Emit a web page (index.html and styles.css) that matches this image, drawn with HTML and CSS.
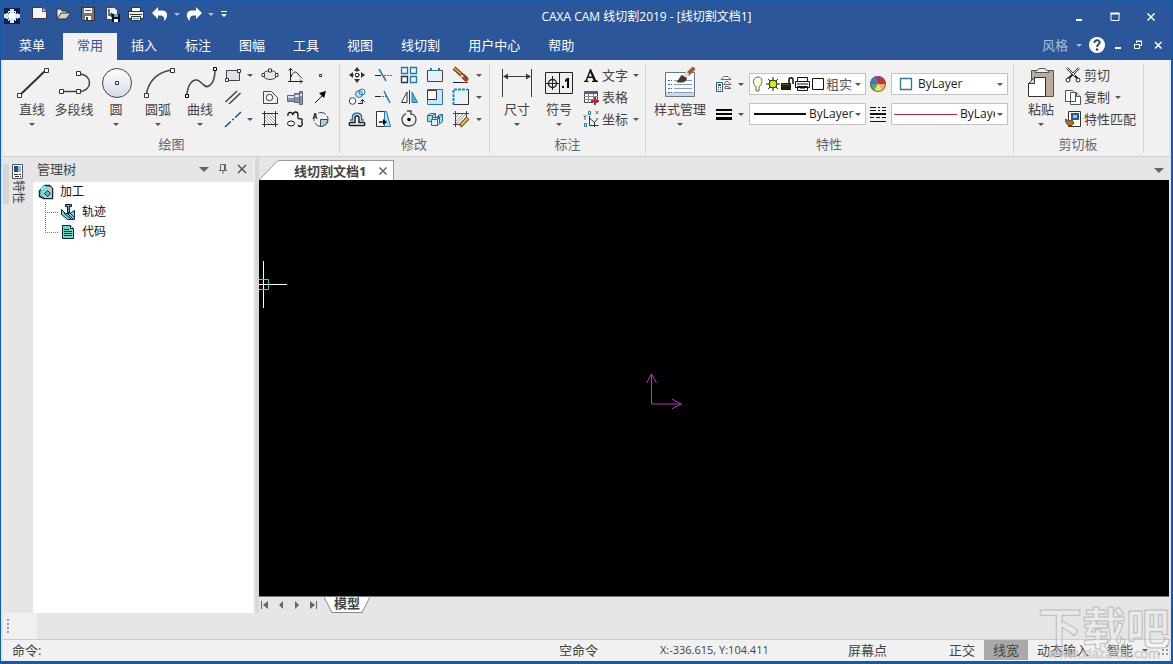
FILE: index.html
```html
<!DOCTYPE html>
<html lang="zh-CN">
<head>
<meta charset="utf-8">
<title>CAXA CAM 线切割2019</title>
<link rel="stylesheet" href="styles.css">
</head>
<body>
<div class="window">
<header class="titlebar">
  <div class="quick">
    <button class="app" aria-label="应用程序"><svg width="16" height="16" viewBox="0 0 16 16"><path fill="#0a1f4c" d="M0 0h16v16H0z"/><path fill="#d4eaf5" d="M6 1h4v2h2v2h2v1h2v4h-2v1h-2v2h-2v2H6v-2H4v-2H2v-1H0V6h2V5h2V3h2z"/><path stroke="#173b6d" stroke-dasharray="1 3" d="M5.500 0v16M10.500 0v16M0 5.500h16M0 10.500h16"/><path fill="#fff" d="M5 5h6v6H5z"/></svg></button>
    <button aria-label="新建"><svg width="18" height="16" viewBox="0 0 18 16"><path fill="#f4f4f4" stroke="#3a3a3a" d="M1.500 1.500h10l4 4v7h-14z"/><path fill="#ccc" stroke="#555" d="M11.500 1.500v4h4"/></svg></button>
    <button aria-label="打开"><svg width="18" height="16" viewBox="0 0 18 16"><path fill="#eee" stroke="#333" d="M2 13V3h4l1 2h5v3"/><path fill="#cfcfcf" stroke="#333" d="M2 13l4-6h10l-5 6z"/></svg></button>
    <button aria-label="保存"><svg width="18" height="16" viewBox="0 0 18 16"><path fill="#777" stroke="#333" d="M2.500 1.500h13v13h-12l-1-1z"/><path fill="#fff" d="M5 2h8v5H5zM6 10h6v4H6z"/><path fill="#444" d="M7 11h2v3H7zM6 4h6v1H6z"/></svg></button>
    <button aria-label="另存为"><svg width="18" height="16" viewBox="0 0 18 16"><path fill="#eee" stroke="#444" d="M3.500 1.500h8l3 3v9h-11z"/><path fill="none" stroke="#16366f" stroke-width="1.300" d="M6 3v6h3M8 7l2 2-2 2"/><path fill="#111" d="M9 8h8v8H9z"/><path fill="#62a7e3" d="M11 8h4v3h-4z"/><path fill="#fff" d="M11 13h4v3h-4z"/></svg></button>
    <button aria-label="打印"><svg width="18" height="16" viewBox="0 0 18 16"><path fill="#fff" stroke="#333" d="M4.500 1.500h9v5h-9z"/><path fill="#eee" stroke="#333" d="M1.500 5.500h15v7h-15z"/><path fill="#333" d="M3 8h12v1H3z"/><path fill="#dff3ff" stroke="#333" d="M4.500 10.500h9v4h-9z"/><path fill="#39a6d8" d="M6 12h6v1H6z"/></svg></button>
    <button aria-label="撤销"><svg width="18" height="16" viewBox="0 0 18 16"><path fill="#fff" d="M1 7l6-6v3.500h4c7 0 6 8 2 10.500 1-4-1-6-6-5.500V13z"/></svg></button>
    <button class="drop" aria-label="撤销列表"><span class="caret"></span></button>
    <button aria-label="重做"><svg width="18" height="16" viewBox="0 0 18 16"><path fill="#fff" d="M17 7l-6-6v3.500H7C0 4.500 1 12.500 5 15c-1-4 1-6 6-5.500V13z"/></svg></button>
    <button class="drop" aria-label="重做列表"><span class="caret"></span></button>
    <button class="custom" aria-label="自定义"><svg width="8" height="10" viewBox="0 0 8 10"><path fill="#fff" d="M1 2h6v1H1zM1 5h6L4 8z"/></svg></button>
  </div>
  <h1>CAXA CAM 线切割2019 - [线切割文档1]</h1>
  <div class="wincontrols">
    <button aria-label="最小化"><svg width="12" height="12"><path fill="#fff" d="M3 8h6v2H3z"/></svg></button>
    <button aria-label="最大化"><svg width="12" height="12"><path fill="none" stroke="#fff" d="M2 2.500h8v7H2z"/><path fill="#fff" d="M1.500 1.500h9v2h-9z"/></svg></button>
    <button aria-label="关闭"><svg width="12" height="12"><path stroke="#fff" stroke-width="1.500" d="M2.500 2.500l7 7m0-7l-7 7"/></svg></button>
  </div>
</header>
<nav class="menubar">
  <button class="first">菜单</button><button class="active">常用</button><button>插入</button><button>标注</button><button>图幅</button><button>工具</button><button>视图</button><button>线切割</button><button>用户中心</button><button>帮助</button>
  <div class="menuright">
    <button class="style">风格<span class="caret"></span></button>
    <button class="help" aria-label="帮助信息"><svg width="18" height="18" viewBox="0 0 18 18"><circle cx="9" cy="9" r="8" fill="#fff"/><path fill="none" stroke="#223d70" stroke-width="1.800" d="M6.300 7c0-3.800 5.700-3.500 5.400-.3C11.500 8.500 9 8.500 9 11"/><circle cx="9" cy="13.500" r="1.200" fill="#223d70"/></svg></button>
    <button aria-label="最小化文档"><svg width="10" height="10"><path fill="#fff" d="M2 7h6v2H2z"/></svg></button>
    <button aria-label="还原文档"><svg width="10" height="10"><path fill="none" stroke="#fff" d="M3.500 3V1.500h5v4H7M1.500 4.500h5v4h-5z"/><path stroke="#fff" d="M3 1h6M1 4.500h6"/></svg></button>
    <button aria-label="关闭文档"><svg width="10" height="10"><path stroke="#fff" stroke-width="1.500" d="M2 2l6.500 6.500m0-6.500L2 8.500"/></svg></button>
  </div>
</nav>
<section class="ribbon">
  <div class="group draw">
    <div class="tools">
      <button class="big"><svg width="36" height="32"><path stroke="#333" stroke-width="2" d="M5.500 28.500L32 3"/><g fill="#fff" stroke="#333"><path d="M3.500 26.500h4v4h-4zM30.500 1.500h4v4h-4z"/></g></svg>直线<span class="caret"></span></button>
      <button class="big"><svg width="36" height="32"><path fill="none" stroke="#444" stroke-width="1.500" d="M6 24.500h17c14 0 14-17.500 0-17.500"/><g fill="#fff" stroke="#333"><path d="M3.500 22.500h4v4h-4zM20.500 22.500h4v4h-4zM20.500 4.500h4v4h-4z"/></g></svg>多段线</button>
      <button class="big"><svg width="36" height="32"><defs><linearGradient id="disc" x2="0" y2="1"><stop stop-color="#fff"/><stop offset="1" stop-color="#d5dae6"/></linearGradient></defs><circle cx="19" cy="16" r="14.500" fill="url(#disc)" stroke="#444"/><path fill="#fff" stroke="#333" d="M17.500 14.500h3v3h-3z"/></svg>圆<span class="caret"></span></button>
      <button class="big"><svg width="36" height="32"><path fill="none" stroke="#444" stroke-width="1.500" d="M6 28C9 13 17 5 32 3"/><g fill="#fff" stroke="#333"><path d="M4.500 26.500h4v4h-4zM30.500 1.500h4v4h-4z"/></g></svg>圆弧<span class="caret"></span></button>
      <button class="big"><svg width="36" height="32"><path fill="none" stroke="#444" stroke-width="1.500" d="M5 29c0-10 5-17 10-16s7 9 12 6 6-9 6-16"/><g fill="#fff" stroke="#000"><path d="M3.500 27.500h3v3h-3zM31.500 .5h3v3h-3z"/></g></svg>曲线<span class="caret"></span></button>
      <div class="grid drawgrid">
        <button class="split" aria-label="矩形"><svg width="18" height="18"><path fill="#dde1ea" stroke="#444" d="M2.500 4.500h13v10h-13z"/><g fill="#fff" stroke="#333"><path d="M1.500 12.500h3v3h-3zM13.500 3.500h3v3h-3z"/></g></svg><span class="caret"></span></button>
        <button aria-label="椭圆"><svg width="18" height="18"><ellipse cx="9" cy="9" rx="7" ry="4.500" fill="#e4e8ee" stroke="#444"/><g fill="#fff" stroke="#333"><path d="M7.500 3h3v3h-3zM1 7.500h2.500v3H1zM14.500 7.500H17v3h-2.500z"/></g></svg></button>
        <button aria-label="公式曲线"><svg width="18" height="18"><path fill="none" stroke="#222" d="M4.500 2v13.500h12M2.500 4.500l2-2 2 2M14 13.500l2 2-2 2M2 15.500h3M5 11c2-6 5-6 7-3s3 3 4 4"/></svg></button>
        <button aria-label="点"><svg width="18" height="18"><path fill="#fff" stroke="#333" d="M8.500 8.500h2v2h-2z"/></svg></button>
        <button class="split" aria-label="平行线"><svg width="18" height="18"><path stroke="#444" stroke-width="1.500" d="M1.500 14L13 3M5 16L16.500 5"/></svg></button>
        <button aria-label="孔"><svg width="18" height="18"><path fill="#eef1f5" stroke="#444" d="M2.500 3.500h8l6 6v6h-14z"/><circle cx="8.500" cy="9.500" r="3.200" fill="#fff" stroke="#333"/></svg></button>
        <button aria-label="轴"><svg width="18" height="18"><path fill="#8494ab" stroke="#5b6b82" d="M1.500 7.500h7v6h-7zM8.500 5.500h5v9h-5zM13.500 3.500h3v13h-3z"/><path stroke="#dbe5f1" stroke-width="2" d="M2 9h6M9 8h4M14 7h2"/></svg></button>
        <button aria-label="箭头"><svg width="18" height="18"><path stroke="#111" d="M4 15l9-9"/><path d="M15 3l-2 7-5-5z"/></svg></button>
        <button class="split" aria-label="中心线"><svg width="18" height="18"><path stroke="#15528f" stroke-width="1.500" stroke-dasharray="8 2 2 2" d="M1 17L17 2"/></svg><span class="caret"></span></button>
        <button aria-label="填充"><svg width="18" height="18"><path fill="#fff" d="M4 4h10v10H4z"/><path fill="none" stroke="#333" d="M3.500 1v16M14.500 1v16M1 3.500h16M1 14.500h16"/><path stroke="#99a" d="M4 4l10 10M7 4l7 7M4 7l7 7M10 4l4 4M4 10l4 4"/></svg></button>
        <button aria-label="云线"><svg width="18" height="18"><path fill="none" stroke="#111" stroke-width="1.300" d="M2 6c-1-4 4-5 5-1 0-4 5-4 5 0 0 2-1 3 1 4 2-1 4 0 3 2-1 1 1 2 0 4s-3 2-4 0"/><ellipse cx="5" cy="13.500" rx="3.500" ry="2.500" fill="#fff" stroke="#111"/></svg></button>
        <button aria-label="局部放大"><svg width="18" height="18"><circle cx="10" cy="9.500" r="7" fill="none" stroke="#444" stroke-dasharray="8 2"/><path fill="#a8d0e8" stroke="#444" d="M9.500 9.500h7c0 4-3 7-7 7z"/><path fill="none" stroke="#222" d="M2 9l2-6 2 6M3 7h3"/></svg></button>
      </div>
    </div>
    <h2>绘图</h2>
  </div>
  <div class="group modify">
    <div class="tools">
      <div class="grid modgrid">
        <button aria-label="平移"><svg width="18" height="18"><path fill="#333" d="M9 1l3 4H6zM9 17l3-4H6zM1 9l4-3v6zM17 9l-4-3v6z"/><path stroke="#333" stroke-dasharray="2 1" d="M9 4v10M4 9h10"/><path fill="#fff" stroke="#333" d="M7.500 7.500h3v3h-3z"/></svg></button>
        <button aria-label="裁剪"><svg width="18" height="18"><path stroke="#222" d="M1 9.500h6"/><path stroke="#2479ad" stroke-dasharray="2 1" d="M10 9.500h8"/><path stroke="#2479ad" stroke-width="1.500" d="M5 3l7 12"/></svg></button>
        <button aria-label="阵列"><svg width="18" height="18"><g fill="#eaf7ff" stroke="#2479ad" stroke-width="1.300"><path d="M1.500 1.500h6v6h-6zM10.500 1.500h6v6h-6zM10.500 10.500h6v6h-6z"/><path stroke="#333" d="M1.500 10.500h6v6h-6z"/></g></svg></button>
        <button aria-label="打断"><svg width="18" height="18"><path fill="#e6f1f8" stroke="#444" d="M4.500 4.500h-3v11h15v-11h-3"/><path stroke="#2479ad" d="M5 4.500h8"/><path stroke="#2479ad" stroke-width="2" d="M5 2v3M13 2v3"/></svg></button>
        <button aria-label="删除"><svg width="18" height="18"><path stroke="#5b3317" stroke-width="4" d="M2 2l10 9"/><path stroke="#e3a04c" stroke-width="2" d="M2 2l7 6"/><path stroke="#8a4a30" stroke-width="5" stroke-linecap="round" d="M12 11l2 2"/><path stroke="#f5e9dc" stroke-width="2" d="M9 9l2 2"/><path stroke="#222" d="M1 16.500h10"/><path stroke="#a22" d="M11 16.500h5"/></svg></button>
        <button class="drop" aria-label="删除选项"><span class="caret"></span></button>
        <button aria-label="复制对象"><svg width="18" height="18"><circle cx="11" cy="6" r="3.500" fill="#bde2f4" stroke="#2479ad"/><circle cx="14" cy="4" r="3" fill="none" stroke="#2479ad"/><circle cx="4.500" cy="13" r="3.300" fill="#fff" stroke="#444"/><path fill="none" stroke="#222" d="M10 15.500h4.500V12M12.500 13.500l2-2 2 2"/></svg></button>
        <button aria-label="延伸"><svg width="18" height="18"><path stroke="#222" d="M1 8.500h6"/><path stroke="#2479ad" stroke-dasharray="2 1" d="M8 8.500h6"/><path stroke="#2479ad" stroke-width="1.500" d="M10 3l6 12"/></svg></button>
        <button aria-label="镜像"><svg width="18" height="18"><path fill="#fff" stroke="#333" d="M1.500 14.500L7 4v10.500z"/><path stroke="#333" d="M9.500 2v14"/><path fill="#62add6" stroke="#2479ad" d="M17.500 14.500L12 4v10.500z"/></svg></button>
        <button aria-label="缩放"><svg width="18" height="18"><path fill="#a9d4ec" stroke="#2479ad" d="M1.500 1.500h15v15h-15z"/><path fill="#cce6f5" d="M11 2h5v14H2v-4h9z"/><path fill="#fff" stroke="#333" d="M1.500 2.500h9v9h-9z"/></svg></button>
        <button aria-label="拉伸"><svg width="18" height="18"><path fill="#e9f2f8" stroke="#333" d="M1.500 1.500h15v15h-15z"/><path fill="none" stroke="#f1f1f1" stroke-width="2" d="M1.500 14V1.500H14"/><path fill="none" stroke="#2383bc" stroke-width="2" stroke-dasharray="3 1" d="M1.500 17V1.500H15"/></svg></button>
        <button class="drop" aria-label="拉伸选项"><span class="caret"></span></button>
        <button aria-label="等距"><svg width="18" height="18"><path fill="none" stroke="#236d9d" stroke-width="1.500" d="M2 10h2.500V7c0-5 9-5 9 0v3H16"/><path fill="none" stroke="#222" stroke-width="1.500" d="M2 15.500h14c1 0 1-3 0-3h-5V8c0-3-4-3-4 0v4.500H2c-1 0-1 3 0 3z"/></svg></button>
        <button aria-label="拉长"><svg width="18" height="18"><path fill="#fff" stroke="#333" d="M2.500 1.500h8v15h-8z"/><path fill="#b5d9ed" stroke="#2479ad" d="M10.500 1.500h2l4 15h-6z"/><path stroke="#111" stroke-width="1.500" d="M5 12h7"/><path d="M9 9l4 3-4 3z"/></svg></button>
        <button aria-label="旋转"><svg width="18" height="18"><path fill="none" stroke="#444" stroke-width="1.300" d="M6 3.500c-7 4-4 13 3.500 12.500s9-10 1.500-12.500M7 1h4v4"/><circle cx="9" cy="9.500" r="1.800"/></svg></button>
        <button aria-label="块"><svg width="18" height="18"><g fill="#a9d7ef" stroke="#236d9d"><path d="M1.500 5.500l3-2h5v6l-3 2h-5zM1.500 5.500h5l3-2M6.500 5.500v6"/><path d="M11.500 6.500l2-2h3v7l-2 2h-3zM11.500 6.500h3l2-2"/><path fill="#d9effa" d="M5.500 9.500l2-2h6v6l-2 2h-6zM5.500 9.500h6l2-2M11.500 9.500v6"/></g></svg></button>
        <button aria-label="填充编辑"><svg width="18" height="18"><path stroke="#444" d="M3.500 1v16M1 3.500h16M1 14.500h11M14.500 1v8"/><path stroke="#99a" d="M4 7l3-3M4 11l7-7M4 14L14 4M8 14l5-5"/><path stroke="#735017" stroke-width="4" d="M8 16l8-8"/><path stroke="#f1c44c" stroke-width="2" d="M9 15l6.500-6.500"/></svg></button>
        <button class="drop" aria-label="填充选项"><span class="caret"></span></button>
      </div>
    </div>
    <h2>修改</h2>
  </div>
  <div class="group annotate">
    <div class="tools">
      <button class="big"><svg width="36" height="32"><path stroke="#3b4032" d="M3.500 2v28M32.500 2v28M5 9.500h26"/><path fill="#3b4032" d="M4 9.500l5-3v6zM32 9.500l-5-3v6z"/></svg>尺寸<span class="caret"></span></button>
      <button class="big"><svg width="36" height="32"><path fill="#eee" stroke="#222" d="M4.500 5.500h27v21h-27z"/><path fill="none" stroke="#222" d="M18.500 5v21M11.500 9v14M5 16.500h13"/><circle cx="11.500" cy="16.500" r="4" fill="none" stroke="#222" stroke-width="1.500"/><path d="M21 19h2v2h-2zM26 11h2v10h-2v-7l-2 1v-2z"/></svg>符号<span class="caret"></span></button>
      <div class="list">
        <button><svg width="16" height="18"><path fill="#111" d="M8 3l5 11 2 1v1H9v-1l1.500-.5-1-2.500H5l-1 2.500 1.500.5v1H1v-1l1.500-.5L7 3zM5.500 10.500H9L7.200 6.500z"/></svg>文字<span class="caret"></span></button>
        <button><svg width="16" height="18"><path fill="#fff" stroke="#444" d="M1.500 3.500h13v11h-13z"/><path fill="#476686" d="M1 3h14v3H1z"/><path stroke="#889" d="M1 8.500h14M1 11.500h14M5.500 6v9M10.500 6v9"/><path stroke="#c1212c" stroke-width="2" d="M12 9v8M8 13h8"/></svg>表格</button>
        <button><svg width="16" height="18"><path fill="none" stroke="#333" d="M6.500 6v9.500h9M6.500 8l5 4.500L15 8M11.500 12v5"/><path fill="none" stroke="#1777b8" d="M.5 5L2 7l1.500-2M2 7v3M12.500 1l3 3m0-3l-3 3M5.500 1.500h2v3h-2zM1.500 13.500h2v3h-2z"/></svg>坐标<span class="caret"></span></button>
      </div>
    </div>
    <h2>标注</h2>
  </div>
  <div class="group props">
    <div class="tools">
      <button class="big wide"><svg width="36" height="32"><path fill="#f8fbff" stroke="#667788" d="M3.500 5.500h29v24h-29z"/><path fill="#cbd8ea" d="M4 25h28v4H4z"/><path stroke="#8b9fb6" d="M12 13.500h18M12 17.500h18M12 21.500h18M12 25.500h18"/><path stroke="#336ca1" stroke-dasharray="2 1" d="M6 13.500h4M6 17.500h4M6 21.500h4M6 25.500h4"/><path stroke="#a45d32" stroke-width="4" stroke-linecap="round" d="M31 2l-5 5"/><path stroke="#ddd" stroke-width="4" d="M26 6l-3 3"/><path fill="#543323" d="M20 8l5 3c-1 5-5 5-11 4 3-1 3-5 6-7z"/></svg>样式管理<span class="caret"></span></button>
      <div class="proprows">
        <div class="proprow">
          <button class="split" aria-label="图层"><svg width="18" height="18"><path fill="#fff" stroke="#666" d="M6 4.500l3-3h4l3 3zM9 9.500l2-3h2l3 3zM10 13.500v-2h3l3 2z"/><path fill="#fff" stroke="#245e91" d="M1.500 7.500h6v9h-6z"/><path fill="#245e91" d="M3 9h3v2H3zM3 12h1v1H3zM5 12h1v1H5zM3 14h1v1H3zM5 14h1v1H5z"/></svg><span class="caret"></span></button>
          <div class="combo layer"><svg width="72" height="18"><path fill="#ffffd8" stroke="#666" d="M4 12C-1 7 2 2 6 2s6 5 1 10v4H4z"/><g stroke="#222"><path d="M21 2v14M14 9h14M16 4l10 10M26 4L16 14"/><circle cx="21" cy="9" r="4" fill="#d3ed00"/></g><path fill="#5a5714" stroke="#111" d="M29.500 8.500h9v6h-9z"/><path fill="none" stroke="#111" stroke-width="1.500" d="M37 8V5c0-3 4-3 4 0v4M30 11h8M30 13h8"/><path fill="#fff" stroke="#111" d="M45.500 2.500h10v4h-10zM43.500 6.500h14v6h-14zM45.500 11.500h10v4h-10z"/><path stroke="#111" d="M45 9h11M48 13h5"/><path fill="#fff" stroke="#111" d="M60.500 3.500h11v11h-11z"/></svg><select aria-label="图层选择"><option>粗实</option></select><span class="caret"></span></div>
          <button class="mid" aria-label="颜色"><svg width="18" height="18"><path fill="#cf2e37" d="M9 9V1a8 8 0 0 1 8 8z"/><path fill="#f0b45a" d="M9 9h8a8 8 0 0 1-4 7z"/><path fill="#eee76d" d="M9 9l4 7a8 8 0 0 1-8 0z"/><path fill="#51ab5c" d="M9 9l-4 7a8 8 0 0 1-4-7z"/><path fill="#3c77cd" d="M9 9H1a8 8 0 0 1 4-7z"/><path fill="#6e4fa3" d="M9 9L5 2a8 8 0 0 1 4-1z"/><circle cx="9" cy="9" r="7.500" fill="none" stroke="#666"/></svg></button>
          <div class="combo"><svg width="22" height="18"><path fill="#fff" stroke="#2479ad" stroke-width="1.300" d="M6.500 3.500h11v11h-11z"/></svg><select aria-label="颜色选择"><option>ByLayer</option></select><span class="caret"></span></div>
        </div>
        <div class="proprow">
          <button class="split" aria-label="线宽设置"><svg width="18" height="18"><path d="M1 4h16v2H1zM1 8h16v2H1zM1 12h16v3H1z"/></svg><span class="caret"></span></button>
          <div class="combo weight"><svg width="56" height="18"><path fill="#111" d="M2 8h52v2H2z"/></svg><select aria-label="线宽选择"><option>ByLayer</option></select><span class="caret"></span></div>
          <button class="mid" aria-label="线型"><svg width="18" height="18"><path stroke="#111" stroke-dasharray="6 2 2 2" d="M1 2.500h16M1 5.500h16"/><path fill="#111" d="M1 8h16v2H1zM1 16h16v1H1z"/><path stroke="#111" stroke-dasharray="4 2" d="M1 12.500h16"/></svg></button>
          <div class="combo"><svg width="64" height="18"><path stroke="#b32832" d="M0 9.500h63"/></svg><select aria-label="线型选择"><option>ByLayer</option></select><span class="caret"></span></div>
        </div>
      </div>
    </div>
    <h2>特性</h2>
  </div>
  <div class="group clip">
    <div class="tools">
      <button class="big"><svg width="36" height="32"><path fill="#b8ac9c" stroke="#554" d="M8.500 3.500h22v26h-22z"/><path fill="#eee" stroke="#555" d="M12 5.500c0-3 3-1 4-4h6c1 3 4 1 4 4z"/><path fill="#fff" stroke="#333" d="M11.500 10.500h11v19h-17v-13z"/><path fill="#d5dbe2" stroke="#333" d="M11.500 10.500v6h-6z"/></svg>粘贴<span class="caret"></span></button>
      <div class="list">
        <button><svg width="16" height="18"><path stroke="#222" stroke-width="2" d="M2 2l11 11M14 2L3 13"/><path stroke="#eee" d="M2 2l8 8M14 2L8 8"/><g fill="#fff" stroke="#222"><circle cx="3" cy="14" r="2"/><circle cx="13" cy="14" r="2"/></g></svg>剪切</button>
        <button><svg width="16" height="18"><path fill="#fff" stroke="#555" d="M.5 2.500h7l3 3v8H.5zM5.500 4.500h6l4 4v8h-10z"/><path fill="#ddd" stroke="#555" d="M11.500 4.500v4h4"/></svg>复制<span class="caret"></span></button>
        <button><svg width="16" height="18"><path fill="#fff" stroke="#333" d="M3.500 1.500h12v15h-12z"/><path fill="#235a91" d="M6 3h8v7H6z"/><path fill="#9bc1df" d="M8 5h4v3H8z"/><path fill="#b46b2b" stroke="#684010" d="M0 9l4 2 3-1 2 3-3 3c-3 0-5-2-6-7z"/></svg>特性匹配</button>
      </div>
    </div>
    <h2>剪切板</h2>
  </div>
</section>
<main class="workspace">
  <aside class="rail"><button><svg width="12" height="16"><path fill="#fff" stroke="#555" d="M.5.5h10v14H.5z"/><path fill="#1d4f86" d="M2 2h7v6H2z"/><path fill="#8eb8d8" d="M6 2h3v6H6z"/><path stroke="#333" stroke-dasharray="4 1" d="M2 10.500h7M3 12.500h6"/></svg><span>特性</span></button></aside>
  <section class="panel">
    <header>
      <h2>管理树</h2>
      <button aria-label="面板菜单"><svg width="12" height="12"><path fill="#666" d="M1 4h10L6 9z"/></svg></button>
      <button aria-label="固定"><svg width="12" height="12"><path fill="none" stroke="#666" d="M3.500 7V1.500h5V7M2 7.500h8M6 7v4M7.500 2v5"/></svg></button>
      <button aria-label="关闭面板"><svg width="12" height="12"><path stroke="#555" stroke-width="1.500" d="M2 2l8 8m0-8l-8 8"/></svg></button>
    </header>
    <ul class="tree">
      <li><svg width="16" height="16"><path fill="#7fd2d0" stroke="#112b33" stroke-width="1.500" d="M1.500 7l5-5.500h5l3 3v10H6l-4.500-2z"/><path fill="#b9c9c9" d="M7 6l3-3h3l1 2v9H6z"/><path stroke="#6ff" stroke-width="2" d="M3 6l4-4"/><path fill="#50bdb9" stroke="#123" d="M9.500 6.500l3 3-3 3-3-3z"/></svg>加工</li>
      <li class="child"><svg width="15" height="20"><path stroke="#777" stroke-dasharray="1 1" d="M.5 0v20M0 10.500h14"/></svg><svg width="16" height="18"><path fill="#64d8cf" stroke="#124" d="M1.500 6.500l4 4h4l5-3v9h-7l-6-5z"/><path stroke="#124" d="M4 10l7 6M7 10l6 6M10 10l4 4"/><path fill="#38bdb8" stroke="#112" d="M5.500 1.500h6v2h-2v6h-2v-6h-2z"/></svg>轨迹</li>
      <li class="child"><svg width="15" height="20"><path stroke="#777" stroke-dasharray="1 1" d="M.5 0v11M0 10.500h14"/></svg><svg width="16" height="18"><path fill="#62ddd3" stroke="#123" d="M2.500 2.500h8l3 3v10h-11z"/><path fill="#fff" stroke="#123" d="M10.500 2.500v3h3"/><path stroke="#123" d="M4 6.500h5M4 8.500h8M4 10.500h8M4 12.500h8"/></svg>代码</li>
    </ul>
  </section>
  <section class="document">
    <div class="doctabs">
      <svg width="20" height="20"><path fill="#fff" stroke="#999" d="M0 20L19 .5h2V20"/><path fill="#fff" d="M19 1h1v19h-1z"/></svg><div class="doctab"><button class="name">线切割文档1</button><button aria-label="关闭标签"><svg width="10" height="10"><path stroke="#666" stroke-width="1.500" d="M1.500 1.500l7 7m0-7l-7 7"/></svg></button></div>
      <button class="tablist" aria-label="标签列表"><svg width="12" height="12"><path fill="#666" d="M1 4h10L6 9z"/></svg></button>
    </div>
    <div class="canvas">
      <svg class="cursor" width="30" height="50"><path stroke="#fff" d="M4.500 1v47M0 24.500h28"/><path fill="none" stroke="#64c991" d="M0 19.500h9.500v10H0"/></svg>
      <svg class="axes" width="36" height="38"><path fill="none" stroke="#c02fc0" d="M5.500 3v30h30M.5 12l5-9 5 9M26 28l9 5-9 5"/></svg>
    </div>
    <div class="sheets">
      <button aria-label="首页"><svg width="10" height="10"><path fill="#666" d="M1 1h1v8H1zM8 1v8L3 5z"/></svg></button>
      <button aria-label="上一页"><svg width="10" height="10"><path fill="#666" d="M7 1v8L3 5z"/></svg></button>
      <button aria-label="下一页"><svg width="10" height="10"><path fill="#666" d="M3 1v8l4-4z"/></svg></button>
      <button aria-label="末页"><svg width="10" height="10"><path fill="#666" d="M8 1h1v8H8zM2 1v8l5-4z"/></svg></button>
      <div class="sheet"><svg width="10" height="16"><path fill="#fff" stroke="#888" d="M0 0l8 15.500h3V0"/><path fill="#fff" d="M9 0h1v15H9z"/></svg><button>模型</button><svg width="10" height="16"><path fill="#fff" stroke="#888" d="M10 0L2 15.500h-3V0"/><path fill="#fff" d="M0 0h1v15H0z"/></svg></div>
    </div>
  </section>
</main>
<div class="dock"><div class="grip"><svg width="4" height="16"><path stroke="#999" stroke-width="2" stroke-dasharray="2 2" d="M2 1v14"/></svg></div></div>
<footer class="status">
  <label for="cmd">命令:</label><input id="cmd" type="text">
  <span class="mode">空命令</span><span class="coords">X:-336.615, Y:104.411</span><span class="point">屏幕点</span>
  <button>正交</button><button class="on">线宽</button><button>动态输入</button><button class="smart">智能<span class="caret"></span></button>
  <svg width="12" height="12"><path fill="#999" d="M9 1h2v2H9zM5 5h2v2H5zM9 5h2v2H9zM1 9h2v2H1zM5 9h2v2H5zM9 9h2v2H9z"/></svg>
</footer>
<div class="watermark"><b>下载吧</b><span>www.xiazaiba.com</span></div>
</div>
</body>
</html>
```
FILE: styles.css
```css
* { box-sizing: border-box; }
body { margin: 0; font: 13px/16px "Open Sans", "Noto Sans CJK SC", sans-serif; color: #444; }
button, input, select { font: inherit; color: inherit; border: 0; padding: 0; margin: 0; background: none; border-radius: 0; }
h1, h2 { margin: 0; font: inherit; }
svg { display: block; flex: none; }
.window { position: relative; height: 100vh; min-height: 400px; display: flex; flex-direction: column; background: #2b579a; border: solid #155aa8; border-width: 1px 2px 3px 1px; overflow: hidden; }
.caret { flex: none; width: 0; height: 0; border: 3px solid transparent; border-top-color: #555; border-bottom: 0; }

.titlebar { display: flex; align-items: center; height: 32px; flex: none; color: #fff; }
.quick { display: flex; align-items: center; padding-left: 3px; margin-bottom: 6px; }
.quick button { width: 24px; display: flex; justify-content: center; }
.quick .app { width: 16px; margin: 4px 8px 0 0; }
.quick .drop { width: 10px; }
.quick .custom { width: 16px; }
.quick .caret { border-top-color: #a9bddd; }
.titlebar h1 { flex: 1; text-align: center; font-size: 12px; white-space: nowrap; }
.wincontrols { display: flex; padding-right: 2px; }
.wincontrols button { width: 36px; display: flex; justify-content: center; }

.menubar { display: flex; flex: none; height: 27px; color: #fff; }
.menubar > button { padding: 0 14px 3px; white-space: nowrap; }
.menubar .first { margin: 0 4px; }
.menubar .active { background: #f1f1f1; color: #2b579a; }
.menuright { margin-left: auto; display: flex; align-items: center; padding: 0 8px 3px 0; gap: 10px; }
.menuright .style { display: flex; align-items: center; gap: 8px; color: #a9bddd; }
.menuright .caret { border-top-color: #a9bddd; }
.menuright .help { margin: 0 -3px 0 -4px; }

.ribbon { display: flex; flex: none; background: #f1f1f1; border: solid #dce6f2; border-width: 0 2px; box-shadow: inset 0 -1px #cfcfcf; padding: 4px 0 4px; }
.group { border-right: 1px solid #d4d4d4; display: flex; flex-direction: column; gap: 5px; }
.group h2 { text-align: center; color: #666; line-height: 18px; }
.tools { display: flex; height: 66px; }
.draw { padding: 0 7px 0 8px; }
.modify { padding: 0 5px 0 4px; }
.annotate { padding: 0 6px; }
.props { padding: 0 5px 0 4px; }
.clip { padding: 0 7px 0 6px; }
.big { width: 42px; display: flex; flex-direction: column; align-items: center; padding-top: 3px; white-space: nowrap; }
.big svg { margin-bottom: 2px; }
.big .caret { margin-top: 6px; }
.wide { width: 60px; }
.grid { display: grid; grid-auto-rows: 22px; }
.grid button { display: flex; align-items: center; justify-content: center; }
.drawgrid { grid-template-columns: 36px repeat(3, 25px); }
.modgrid { grid-template-columns: repeat(5, 26px) 10px; }
.grid .split, .split { display: flex; align-items: center; justify-content: flex-start; gap: 5px; padding-left: 3px; }
.list { display: grid; grid-auto-rows: 22px; padding-left: 3px; }
.list button { display: flex; align-items: center; gap: 3px; white-space: nowrap; }
.list .caret { margin-left: 2px; }
.proprows { display: grid; grid-auto-rows: 22px; gap: 8px; padding: 9px 0 0 2px; }
.proprow { display: flex; align-items: center; }
.proprow .split { width: 37px; }
.mid { width: 25px; display: flex; justify-content: center; padding-right: 2px; }
.combo { width: 117px; height: 22px; display: flex; align-items: center; background: #fff; border: 1px solid #c3c3c3; font-size: 12px; padding: 0 4px 0 2px; gap: 2px; }
.combo select { appearance: none; flex: 1; min-width: 0; height: 20px; color: #222; overflow: hidden; text-overflow: clip; }
.layer { font-size: 13px; }
.layer select { color: #555; }
.weight { gap: 1px; }

.workspace { flex: 1; min-height: 0; display: flex; background: #e6e6e6; border: solid #dce6f2; border-width: 0 2px; }
.rail { width: 30px; padding-top: 7px; }
.rail button { display: flex; flex-direction: column; align-items: center; width: 24px; border-left: 6px solid #d6d6d6; }
.rail span { width: 24px; font-size: 12px; line-height: 24px; transform: rotate(90deg); }
.panel { width: 222px; display: flex; flex-direction: column; border-right: 2px solid #eee; }
.panel header { height: 25px; display: flex; align-items: center; padding: 0 5px 2px 4px; gap: 7px; }
.panel header h2 { flex: 1; }
.panel header button { width: 12px; }
.tree { flex: 1; list-style: none; margin: 0; padding: 0 0 0 5px; background: #fff; color: #111; font-size: 12px; }
.tree li { height: 20px; display: flex; align-items: center; gap: 6px; }
.tree .child { padding-left: 7px; }
.tree .child svg + svg { margin-left: -6px; }
.document { flex: 1; min-width: 0; display: flex; flex-direction: column; border-left: 4px solid #d8d8d8; }
.doctabs { display: flex; height: 23px; align-items: flex-end; }
.doctab { height: 20px; display: flex; align-items: center; gap: 12px; background: #fff; border: solid #999; border-width: 1px 1px 0 0; padding: 0 5px 0 15px; }
.name { font-weight: bold; }
.tablist { margin-left: auto; padding: 0 4px 4px 0; }
.canvas { position: relative; flex: 1; min-height: 0; background: #000; }
.cursor { position: absolute; left: 0; top: 80px; }
.axes { position: absolute; left: 42.5%; top: 46%; }
.sheets { height: 17px; display: flex; align-items: center; border-top: 1px solid #777; gap: 6px; padding-left: 1px; }
.sheet { display: flex; height: 16px; }
.sheet button { background: #fff; border-bottom: 1px solid #888; font-weight: bold; line-height: 12px; padding-bottom: 3px; }

.dock { height: 26px; flex: none; background: #e6e6e6; border: solid #dce6f2; border-width: 0 2px; }
.grip { width: 34px; height: 100%; background: #f0f0f0; display: flex; align-items: center; padding-left: 3px; }
.status { flex: none; height: 22px; display: flex; align-items: center; background: #f1f1f1; border: solid #dce6f2; border-width: 0 2px; box-shadow: inset 0 1px #ccc; padding-left: 9px; white-space: nowrap; }
.status input { flex: 1; min-width: 0; }
.mode { width: 101px; }
.coords { width: 188px; font-size: 11px; }
.point { width: 92px; }
.status button { height: 20px; padding: 0 9px; }
.status .on { background: #a9a9a9; }
.status .smart { display: flex; align-items: center; gap: 9px; }

.watermark { position: absolute; right: 0; bottom: 0; width: 134px; display: flex; flex-direction: column; align-items: center; pointer-events: none; color: rgba(255, 255, 255, .3); white-space: nowrap; opacity: .7; }
.watermark b { font-size: 44px; line-height: 42px; -webkit-text-stroke: 1px #aaa; }
.watermark span { font-size: 13px; line-height: 12px; margin-top: -2px; padding-bottom: 2px; -webkit-text-stroke: 1px #c4c4c4; }
```
